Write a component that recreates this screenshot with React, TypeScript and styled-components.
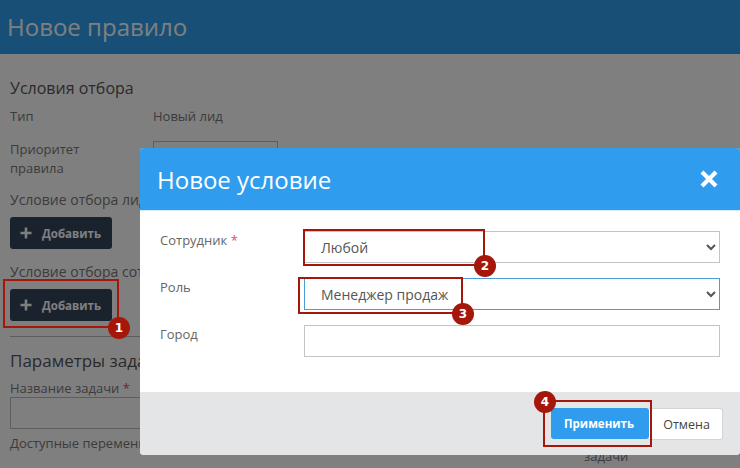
import React from 'react'
import styled, { createGlobalStyle } from 'styled-components'

const GlobalStyle = createGlobalStyle`
  html, body {
    margin: 0;
    padding: 0;
    background: #fff;
  }
  * {
    box-sizing: border-box;
  }
`

const PlusIcon = () => (
  <svg width="12" height="12" viewBox="0 0 12 12" aria-hidden="true">
    <path d="M6 .5v11M.5 6h11" stroke="currentColor" strokeWidth="2.6" fill="none" />
  </svg>
)

const CloseIcon = () => (
  <svg width="20" height="20" viewBox="0 0 20 20" aria-hidden="true">
    <path d="M3 3l14 14M17 3L3 17" stroke="#fff" strokeWidth="4.2" fill="none" />
  </svg>
)

const marks = [
  { n: 1, x: 3, y: 279, w: 116, h: 49 },
  { n: 2, x: 303, y: 229, w: 182, h: 37 },
  { n: 3, x: 298, y: 277, w: 165, h: 37 },
  { n: 4, x: 543, y: 400, w: 109, h: 47 },
]

export default function App() {
  return (
    <Stage>
      <GlobalStyle />
      <Header>
        <PageTitle>Новое правило</PageTitle>
      </Header>
      <Content>
        <SectionTitle>Условия отбора</SectionTitle>
        <FormRow>
          <RowLabel>Тип</RowLabel>
          <span>Новый лид</span>
        </FormRow>
        <PriorityRow>
          <PriorityLabel>Приоритет правила</PriorityLabel>
          <PriorityInput />
        </PriorityRow>
        <BlockLabel>Условие отбора лида</BlockLabel>
        <AddButton>
          <PlusIcon />
          Добавить
        </AddButton>
        <SecondLabel>Условие отбора сотрудника</SecondLabel>
        <AddButton>
          <PlusIcon />
          Добавить
        </AddButton>
        <Divider />
        <ParamsTitle>Параметры задачи</ParamsTitle>
        <TaskLabel>
          Название задачи <Required>*</Required>
        </TaskLabel>
        <TaskInput />
        <VarsLabel>Доступные переменные</VarsLabel>
      </Content>
      <BehindWord>задачи</BehindWord>
      <Backdrop />
      <Modal>
        <ModalHeader>
          <ModalTitle>Новое условие</ModalTitle>
          <CloseButton aria-label="Закрыть">
            <CloseIcon />
          </CloseButton>
        </ModalHeader>
        <ModalBody>
          <Field>
            <FieldLabel>
              Сотрудник <Required>*</Required>
            </FieldLabel>
            <Select defaultValue="any">
              <option value="any">Любой</option>
            </Select>
          </Field>
          <Field>
            <FieldLabel>Роль</FieldLabel>
            <Select $focused defaultValue="manager">
              <option value="manager">Менеджер продаж</option>
            </Select>
          </Field>
          <Field>
            <FieldLabel>Город</FieldLabel>
            <TextInput />
          </Field>
        </ModalBody>
        <ModalFooter>
          <PrimaryButton>Применить</PrimaryButton>
          <CancelButton>Отмена</CancelButton>
        </ModalFooter>
      </Modal>
      {marks.map((m) => (
        <Mark key={m.n} $x={m.x} $y={m.y} $w={m.w} $h={m.h}>
          <Badge>{m.n}</Badge>
        </Mark>
      ))}
    </Stage>
  )
}

const Stage = styled.div`
  position: relative;
  width: 740px;
  height: 468px;
  overflow: hidden;
  background: #fff;
  color: #777;
  font-family: 'Open Sans', 'Noto Sans', sans-serif;
  font-size: 13px;
`

const Header = styled.header`
  height: 54px;
  background: #2f9fef;
  padding: 0 7px;
  display: flex;
  align-items: center;
`

const PageTitle = styled.h1`
  margin: 0 0 2px;
  font-size: 24px;
  font-weight: 400;
  color: #fff;
`

const Content = styled.main`
  padding: 24px 10px 0;
  display: flex;
  flex-direction: column;
  align-items: flex-start;
`

const SectionTitle = styled.h2`
  margin: 0;
  font-size: 16px;
  line-height: 20px;
  font-weight: 400;
  color: #555;
`

const FormRow = styled.div`
  display: flex;
  margin-top: 9px;
  line-height: 18px;
`

const RowLabel = styled.div`
  width: 143px;
  padding-right: 50px;
  line-height: 19px;
`

const PriorityLabel = styled(RowLabel)`
  margin-top: -1px;
`

const PriorityRow = styled(FormRow)`
  margin-top: 15px;
  height: 40px;
  align-items: flex-start;
`

const PriorityInput = styled.div`
  width: 125px;
  height: 32px;
  background: #fff;
  border: 1px solid #bbb;
`

const BlockLabel = styled.div`
  margin-top: 10px;
  font-size: 14px;
  line-height: 18px;
  white-space: nowrap;
`

const SecondLabel = styled(BlockLabel)`
  margin-top: 14px;
`

const AddButton = styled.button`
  display: flex;
  align-items: center;
  gap: 10px;
  width: 102px;
  height: 32px;
  margin-top: 8px;
  padding: 0 10px;
  border: 0;
  border-radius: 3px;
  background: #34465a;
  color: #fff;
  font-family: inherit;
  font-size: 11.5px;
  font-weight: 700;
`

const Divider = styled.hr`
  align-self: stretch;
  margin: 15px 0 0;
  border: 0;
  border-top: 1px solid #bbb;
`

const ParamsTitle = styled.h2`
  margin: 13px 0 0;
  font-size: 17px;
  line-height: 22px;
  font-weight: 400;
  color: #555;
  white-space: nowrap;
`

const TaskLabel = styled.div`
  margin-top: 7px;
  line-height: 18px;
`

const Required = styled.span`
  color: #d9534f;
`

const TaskInput = styled.div`
  width: 300px;
  height: 32px;
  background: #fff;
  border: 1px solid #bbb;
`

const VarsLabel = styled.div`
  margin-top: 5px;
  font-size: 13px;
  line-height: 18px;
  white-space: nowrap;
`

const BehindWord = styled.span`
  position: absolute;
  left: 584px;
  top: 447px;
  line-height: 18px;
`

const Backdrop = styled.div`
  position: absolute;
  inset: 0;
  background: rgba(0, 0, 0, 0.5);
`

const Modal = styled.section`
  position: absolute;
  left: 140px;
  top: 148px;
  width: 600px;
  height: 307px;
  display: flex;
  flex-direction: column;
  background: #fff;
  border-radius: 4px;
  overflow: hidden;
`

const ModalHeader = styled.div`
  height: 63px;
  flex: none;
  display: flex;
  align-items: center;
  justify-content: space-between;
  padding: 0 21px 0 17px;
  background: #2f9ced;
  border-bottom: 1px solid #d8ecfb;
`

const ModalTitle = styled.h3`
  margin: 0;
  font-size: 24px;
  font-weight: 400;
  color: #fff;
`

const CloseButton = styled.button`
  display: flex;
  padding: 0;
  border: 0;
  background: none;
`

const ModalBody = styled.div`
  flex: 1;
  display: flex;
  flex-direction: column;
  gap: 15px;
  padding: 20px 20px 0;
`

const Field = styled.div`
  display: grid;
  grid-template-columns: 144px 416px;
  height: 32px;
`

const FieldLabel = styled.label`
  font-size: 13px;
  line-height: 18px;
  color: #666;
`

const Select = styled.select<{ $focused?: boolean }>`
  height: 32px;
  padding: 0 12px;
  background: #fff;
  border: 1px solid ${(p) => (p.$focused ? '#4a9fd8' : '#c4c4c4')};
  border-radius: 0;
  outline: none;
  color: #555;
  font-family: inherit;
  font-size: 14px;
`

const TextInput = styled.input`
  height: 32px;
  padding: 0 12px;
  background: #fff;
  border: 1px solid #c4c4c4;
  outline: none;
`

const ModalFooter = styled.div`
  height: 63px;
  flex: none;
  display: flex;
  align-items: flex-start;
  padding: 16px 17px 0 411px;
  background: #e4e5e6;
`

const PrimaryButton = styled.button`
  width: 98px;
  height: 31px;
  padding: 0 2px 0 0;
  border: 0;
  border-radius: 3px;
  background: #2f9ced;
  color: #fff;
  font-family: inherit;
  font-size: 11.5px;
  font-weight: 700;
`

const CancelButton = styled.button`
  width: 74px;
  height: 32px;
  padding: 0 0 0 2px;
  background: #fff;
  border: 1px solid #d5d5d5;
  border-left: 0;
  border-radius: 0 3px 3px 0;
  color: #444;
  font-family: inherit;
  font-size: 12.5px;
`

const Mark = styled.div<{ $x: number; $y: number; $w: number; $h: number }>`
  position: absolute;
  left: ${(p) => p.$x}px;
  top: ${(p) => p.$y}px;
  width: ${(p) => p.$w}px;
  height: ${(p) => p.$h}px;
  border: 2px solid #a5170a;
  &:last-child > span {
    left: -11px;
    top: -11px;
    right: auto;
    bottom: auto;
  }
`

const Badge = styled.span`
  position: absolute;
  right: -13px;
  bottom: -13px;
  width: 22px;
  height: 22px;
  border-radius: 50%;
  background: #a5170a;
  color: #fff;
  display: flex;
  align-items: center;
  justify-content: center;
  font-family: 'DejaVu Sans', sans-serif;
  font-size: 12px;
  font-weight: 700;
`
